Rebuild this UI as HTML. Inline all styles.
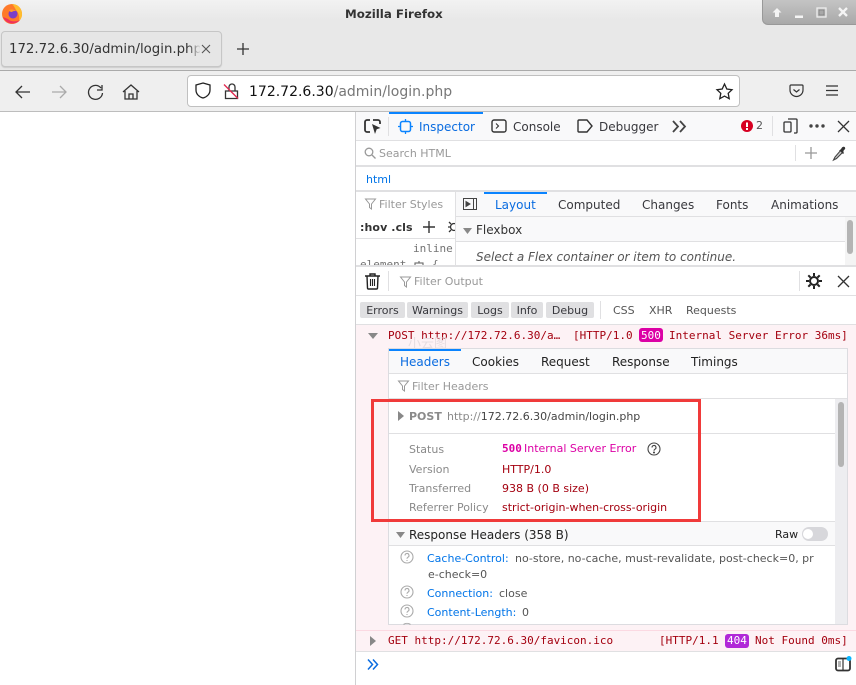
<!DOCTYPE html>
<html><head><meta charset="utf-8">
<style>
html,body{margin:0;padding:0;width:856px;height:685px;overflow:hidden;background:#fff}
body{position:relative;font-family:"DejaVu Sans","Liberation Sans",sans-serif;color:#38383d}
.t{position:absolute;white-space:nowrap;line-height:16px;font-size:12px}
.m{font-family:"DejaVu Sans Mono","Liberation Mono",monospace;font-size:11px}
.b{position:absolute}
svg{position:absolute;overflow:visible}
.btn{position:absolute;top:302px;height:16px;background:#e0e0e2;border-radius:2px;font-size:11px;line-height:18px;text-align:center;color:#38383d}
</style></head><body>
<!-- title bar -->
<div class="b" style="left:0;top:0;width:856px;height:70px;background:linear-gradient(#f2f2f2,#e8e8e8 20px,#e8e8e8)"></div>
<div class="t" style="left:345px;top:6px;font-size:11.8px;font-weight:bold;color:#333">Mozilla Firefox</div>
<svg style="left:2px;top:2px" width="21" height="22" viewBox="0 0 21 22">
<circle cx="10" cy="12" r="10" fill="#ff7a2a"/><path d="M10 2a10 10 0 0 1 10 10c0 3-1 5-3 7 1-5-1-9-3-11-1-2-2-4-4-6z" fill="#ffbd2e"/><path d="M1 15a10 10 0 0 0 17 3c-4 2-9 2-12-1z" fill="#f0325c"/><circle cx="11" cy="12" r="4.5" fill="#7a3fc8"/><path d="M7 8c2-1 5-1 7 1-2 0-3 0-4 1-1 0-2 0-3-2z" fill="#ff9a2a"/>
</svg>
<div class="b" style="left:762px;top:0;width:94px;height:25px;background:linear-gradient(#c4c4c4,#a9a9a9);border-radius:0 0 0 6px;border-left:1px solid #999;border-bottom:1px solid #999;box-sizing:border-box"></div>
<svg style="left:770px;top:6px" width="80" height="14" viewBox="0 0 80 14">
<path d="M7 2l4.500 4.500H9V11H5V6.500H2.500z" fill="#f4f4f4"/>
<rect x="25" y="9.500" width="8" height="2.500" fill="#f4f4f4"/>
<rect x="47" y="2" width="9" height="9" fill="none" stroke="#eee" stroke-width="1.300"/><rect x="49" y="4" width="5" height="5" fill="#a8a8a8" stroke="#777" stroke-width=".6"/>
<path d="M69 2l8 8M77 2l-8 8" stroke="#f4f4f4" stroke-width="2.300"/>
</svg>
<!-- tab -->
<div class="b" style="left:1px;top:31px;width:221px;height:36px;background:#e6e6e6;border:1px solid #c6c6c6;box-sizing:border-box;border-radius:4px;box-shadow:0 1px 1px #ccc"></div>
<div class="t" style="left:9px;top:42px;font-size:13.3px;color:#333;width:191px;overflow:hidden">172.72.6.30/admin/login.php</div>
<div class="b" style="left:188px;top:33px;width:13px;height:32px;background:linear-gradient(90deg,rgba(230,230,230,0),#e6e6e6)"></div>
<svg style="left:201px;top:44px" width="10" height="10"><path d="M1 1l8 8M9 1l-8 8" stroke="#555" stroke-width="1.100"/></svg>
<svg style="left:236px;top:42px" width="14" height="14"><path d="M7 1v12M1 7h12" stroke="#333" stroke-width="1.300"/></svg>
<!-- nav -->
<div class="b" style="left:0;top:70px;width:856px;height:1px;background:#aaa"></div>
<div class="b" style="left:0;top:71px;width:856px;height:40px;background:#efefef"></div>
<div class="b" style="left:0;top:111px;width:856px;height:1px;background:#bdbdbd"></div>
<svg style="left:15px;top:83px" width="130" height="18" viewBox="0 0 130 18" fill="none" stroke="#333" stroke-width="1.300">
<path d="M1 9h14M7 3L1 9l6 6"/>
<path d="M37 9h14M45 3l6 6-6 6" stroke="#aaa"/>
<path d="M86 5a7 7 0 1 0 1.500 5M87 2v5h-5"/>
<path d="M108 9l8-7 8 7M110 8v8h12V8M114 16v-5h4v5"/>
</svg>
<div class="b" style="left:187px;top:75px;width:553px;height:32px;background:#fff;border:1px solid #c0c0c0;box-sizing:border-box;border-radius:4px"></div>
<svg style="left:195px;top:82px" width="18" height="18" fill="none" stroke="#222" stroke-width="1.300"><path d="M8 1l7 2v5c0 4-3 7-7 8-4-1-7-4-7-8V3z"/></svg>
<svg style="left:224px;top:83px" width="16" height="17" fill="none"><path d="M5 8V4a3 3 0 0 1 6 0v4M1.500 8h12v7.500h-12z" stroke="#333" stroke-width="1.300"/><path d="M0 1.500l14 14" stroke="#e22850" stroke-width="1.300"/></svg>
<div class="t" style="left:249px;top:84px;font-size:14px;color:#111">172.72.6.30<span style="color:#777">/admin/login.php</span></div>
<svg style="left:716px;top:83px" width="17" height="17" fill="none" stroke="#222" stroke-width="1.300"><path d="M8.500 1l2.300 5 5.200.7-3.800 3.600 1 5.400-4.700-2.600-4.700 2.600 1-5.400L1 6.700 6.200 6z"/></svg>
<svg style="left:789px;top:84px" width="15" height="14" fill="none" stroke="#333" stroke-width="1.200"><path d="M2 1h11a1 1 0 0 1 1 1v4a6.500 6.500 0 0 1-13 0V2a1 1 0 0 1 1-1z"/><path d="M4.500 5.500L7.500 8l3-2.500"/></svg>
<svg style="left:826px;top:85px" width="12" height="11" stroke="#333" stroke-width="1.200"><path d="M0 1h12M0 5.500h12M0 10h12"/></svg>
<!-- devtools frame -->
<div class="b" style="left:355px;top:112px;width:1px;height:573px;background:#d0d0d2"></div>
<div class="b" style="left:356px;top:112px;width:500px;height:28px;background:#f9f9fa"></div>
<div class="b" style="left:389px;top:112px;width:94px;height:2px;background:#0a84ff"></div>
<div class="b" style="left:356px;top:140px;width:500px;height:1px;background:#e0e0e2"></div>
<svg style="left:364px;top:119px" width="18" height="15" fill="none"><path d="M6 1H3a2 2 0 0 0-2 2v8a2 2 0 0 0 2 2h3M9 1h5a2 2 0 0 1 2 2v2" stroke="#333" stroke-width="1.800"/><path d="M8 5l8.500 4-3.800 1.300L11 15z" fill="#333"/></svg>
<div class="b" style="left:388px;top:117px;width:1px;height:19px;background:#e0e0e2"></div>
<svg style="left:398px;top:119px" width="15" height="15" fill="none" stroke="#0a84ff"><rect x="2.500" y="2.500" width="10" height="10" rx="2" stroke-width="1.500"/><path d="M7.500 0v2M7.500 13v2M0 7.500h2M13 7.500h2" stroke-width="1.300"/></svg>
<div class="t" style="left:419px;top:119px;color:#0a6ce0">Inspector</div>
<svg style="left:491px;top:119px" width="16" height="14" fill="none" stroke="#333" stroke-width="1.400"><rect x="1" y="1" width="14" height="12" rx="2"/><path d="M5 4.500L7.500 7 5 9.500" stroke-width="1.100"/></svg>
<div class="t" style="left:513px;top:119px">Console</div>
<svg style="left:577px;top:119px" width="16" height="14" fill="none" stroke="#333" stroke-width="1.400"><path d="M2 1h8l5 6-5 6H2a1 1 0 0 1-1-1V2a1 1 0 0 1 1-1z"/></svg>
<div class="t" style="left:599px;top:119px">Debugger</div>
<svg style="left:672px;top:120px" width="15" height="13" fill="none" stroke="#444" stroke-width="1.800"><path d="M1 1l5 5.500L1 12M8 1l5 5.500L8 12"/></svg>
<svg style="left:741px;top:120px" width="12" height="12"><circle cx="6" cy="6" r="6" fill="#d70022"/><rect x="5" y="2.500" width="2" height="4.500" fill="#fff"/><rect x="5" y="8" width="2" height="2" fill="#fff"/></svg>
<div class="t" style="left:756px;top:118px;font-size:11px;color:#555">2</div>
<div class="b" style="left:772px;top:116px;width:1px;height:20px;background:#e0e0e2"></div>
<svg style="left:783px;top:118px" width="15" height="16" fill="none" stroke="#333" stroke-width="1.300"><rect x="1" y="4" width="7" height="10" rx="1"/><path d="M5 1h8a1 1 0 0 1 1 1v12a1 1 0 0 1-1 1h-2"/></svg>
<svg style="left:809px;top:124px" width="16" height="4" fill="#444"><circle cx="2" cy="2" r="1.700"/><circle cx="8" cy="2" r="1.700"/><circle cx="14" cy="2" r="1.700"/></svg>
<svg style="left:838px;top:121px" width="11" height="11" stroke="#333" stroke-width="1.300"><path d="M0 0l11 11M11 0L0 11"/></svg>
<!-- search html -->
<svg style="left:364px;top:147px" width="12" height="12" fill="none" stroke="#999" stroke-width="1.300"><circle cx="5" cy="5" r="3.800"/><path d="M8 8l3.500 3.500"/></svg>
<div class="t" style="left:379px;top:146px;font-size:11px;color:#999">Search HTML</div>
<div class="b" style="left:795px;top:145px;width:1px;height:16px;background:#e0e0e2"></div>
<svg style="left:805px;top:147px" width="12" height="12" stroke="#999" stroke-width="1.300"><path d="M6 0v12M0 6h12"/></svg>
<svg style="left:832px;top:146px" width="14" height="15" fill="none"><path d="M9 4l2 2-6.500 6.500-3 1.500 1.500-3z" stroke="#444" stroke-width="1.100" fill="#ccc"/><path d="M8 4l1-1 1-1.500c1-1 2.500-1 3 0s0 2-1 2.500L11 6l1 1-1 1-4-4 1 0z" fill="#333"/></svg>
<div class="b" style="left:356px;top:165px;width:500px;height:2px;background:#e0e0e2"></div>
<div class="t" style="left:366px;top:172px;font-size:11px;color:#0074e8">html</div>
<div class="b" style="left:356px;top:190px;width:500px;height:2px;background:#e0e0e2"></div>
<!-- left rules pane -->
<svg style="left:365px;top:198px" width="11" height="12" fill="none" stroke="#999"><path d="M.5 1h10L6.500 6v5l-2-1.500V6z"/></svg>
<div class="t" style="left:379px;top:197px;font-size:11px;color:#999">Filter Styles</div>
<div class="t" style="left:360px;top:220px;font-size:11px;font-weight:bold;color:#333;letter-spacing:.1px">:hov .cls</div>
<svg style="left:423px;top:221px" width="12" height="12" stroke="#333" stroke-width="1.400"><path d="M6 0v12M0 6h12"/></svg>
<svg style="left:448px;top:221px" width="7" height="12" fill="none" stroke="#333" stroke-width="1.300"><circle cx="6" cy="6" r="3.500"/><path d="M1 1l2 2M1 11l2-2M0 6h2"/></svg>
<div class="b" style="left:356px;top:238px;width:99px;height:1px;background:#e0e0e2"></div>
<div class="t m" style="left:413px;top:241px;color:#737373;letter-spacing:0">inline</div>
<div class="b" style="left:356px;top:256px;width:99px;height:9px;overflow:hidden"><div class="t m" style="left:4px;top:1px;color:#737373">element</div>
<svg style="left:57px;top:5px" width="12" height="12" fill="none" stroke="#666" stroke-width="1.100"><rect x="2" y="2" width="8" height="8"/><path d="M6 0v2M0 6h2M10 6h2"/></svg>
<div class="t m" style="left:76px;top:1px;color:#737373">{</div></div>
<div class="b" style="left:455px;top:192px;width:1px;height:73px;background:#e0e0e2"></div>
<!-- right side tabs -->
<div class="b" style="left:456px;top:192px;width:400px;height:24px;background:#f9f9fa"></div>
<div class="b" style="left:484px;top:192px;width:63px;height:2px;background:#0a84ff"></div>
<div class="b" style="left:456px;top:216px;width:400px;height:1px;background:#e0e0e2"></div>
<svg style="left:463px;top:198px" width="14" height="12" fill="none" stroke="#444"><rect x=".5" y=".5" width="13" height="11"/><path d="M10.500 0v12"/><path d="M3 3.500L7 6 3 8.500z" fill="#444"/></svg>
<div class="t" style="left:495px;top:197px;color:#0a6ce0">Layout</div>
<div class="t" style="left:558px;top:197px">Computed</div>
<div class="t" style="left:642px;top:197px">Changes</div>
<div class="t" style="left:716px;top:197px">Fonts</div>
<div class="t" style="left:771px;top:197px">Animations</div>
<div class="b" style="left:456px;top:217px;width:389px;height:24px;background:#f9f9fa"></div>
<div class="b" style="left:456px;top:241px;width:389px;height:1px;background:#e0e0e2"></div>
<svg style="left:463px;top:228px" width="9" height="6"><path d="M0 0h9L4.500 6z" fill="#888"/></svg>
<div class="t" style="left:476px;top:222px;color:#333">Flexbox</div>
<div class="t" style="left:476px;top:249px;color:#555;font-style:italic">Select a Flex container or item to continue.</div>
<div class="b" style="left:845px;top:217px;width:11px;height:48px;background:#f4f4f4"></div>
<div class="b" style="left:847px;top:220px;width:6px;height:34px;background:#b4b4b4;border-radius:3px"></div>
<div class="b" style="left:356px;top:265px;width:500px;height:2px;background:#e0e0e2"></div>
<!-- console toolbar -->
<svg style="left:365px;top:273px" width="15" height="17" fill="none" stroke="#222" stroke-width="1.400"><path d="M0 3h15M5 3V1h5v2M2 3l.5 12a1 1 0 0 0 1 1h8a1 1 0 0 0 1-1L13 3"/><path d="M5.500 6v7M7.500 6v7M9.500 6v7" stroke-width="1.100"/></svg>
<div class="b" style="left:388px;top:271px;width:1px;height:20px;background:#e0e0e2"></div>
<svg style="left:400px;top:276px" width="11" height="12" fill="none" stroke="#999"><path d="M.5 1h10L6.500 6v5l-2-1.500V6z"/></svg>
<div class="t" style="left:414px;top:274px;font-size:11px;color:#999">Filter Output</div>
<div class="b" style="left:799px;top:271px;width:1px;height:20px;background:#e0e0e2"></div>
<svg style="left:806px;top:273px" width="16" height="16" fill="none" stroke="#222"><circle cx="8" cy="8" r="4" stroke-width="2"/><path d="M8 0v3M8 13v3M0 8h3M13 8h3M2.300 2.300l2.200 2.200M11.500 11.500l2.200 2.200M13.700 2.300l-2.200 2.200M4.500 11.500l-2.200 2.200" stroke-width="2"/></svg>
<svg style="left:838px;top:276px" width="11" height="11" stroke="#333" stroke-width="1.300"><path d="M0 0l11 11M11 0L0 11"/></svg>
<div class="b" style="left:356px;top:295px;width:500px;height:1px;background:#e0e0e2"></div>
<div class="btn" style="left:360px;width:45px">Errors</div>
<div class="btn" style="left:407px;width:61px">Warnings</div>
<div class="btn" style="left:471px;width:38px">Logs</div>
<div class="btn" style="left:511px;width:32px">Info</div>
<div class="btn" style="left:546px;width:48px">Debug</div>
<div class="b" style="left:600px;top:301px;width:1px;height:18px;background:#e0e0e2"></div>
<div class="t" style="left:613px;top:303px;font-size:11px;color:#555">CSS</div>
<div class="t" style="left:649px;top:303px;font-size:11px;color:#555">XHR</div>
<div class="t" style="left:686px;top:303px;font-size:11px;color:#555">Requests</div>
<!-- error area -->
<div class="b" style="left:356px;top:324px;width:500px;height:328px;background:#fdf2f5"></div>
<div class="b" style="left:356px;top:324px;width:500px;height:1px;background:#e0e0e2"></div>
<svg style="left:368px;top:333px" width="10" height="6"><path d="M0 0h10L5 6z" fill="#888"/></svg>
<div class="t m" style="left:388px;top:328px;color:#a4000f;font-size:11px">POST http://172.72.6.30/a…</div>
<div class="t m" style="left:573px;top:328px;color:#a4000f;font-size:11px">[HTTP/1.0</div>
<div class="b" style="left:639px;top:328px;width:24px;height:14px;background:#dc00a5;border-radius:3px"></div>
<div class="t m" style="left:641px;top:328px;color:#fff;font-size:11px">500</div>
<div class="t m" style="left:669px;top:328px;color:#a4000f;font-size:11px">Internal Server Error 36ms]</div>
<div class="t" style="left:408px;top:335px;font-size:13px;color:#e6dde1;font-family:'Noto Sans CJK SC',sans-serif">小云图</div>
<!-- panel -->
<div class="b" style="left:388px;top:348px;width:460px;height:277px;background:#fff;border:1px solid #dcdce0;box-sizing:border-box"></div>
<div class="b" style="left:389px;top:349px;width:458px;height:24px;background:#f9f9fa"></div>
<div class="b" style="left:389px;top:349px;width:72px;height:2px;background:#0a84ff"></div>
<div class="b" style="left:389px;top:373px;width:458px;height:1px;background:#e0e0e2"></div>
<div class="t" style="left:400px;top:354px;color:#0a6ce0">Headers</div>
<div class="t" style="left:472px;top:354px;color:#222">Cookies</div>
<div class="t" style="left:541px;top:354px;color:#222">Request</div>
<div class="t" style="left:612px;top:354px;color:#222">Response</div>
<div class="t" style="left:691px;top:354px;color:#222">Timings</div>
<svg style="left:398px;top:380px" width="11" height="12" fill="none" stroke="#999"><path d="M.5 1h10L6.500 6v5l-2-1.500V6z"/></svg>
<div class="t" style="left:412px;top:379px;font-size:11px;color:#999">Filter Headers</div>
<div class="b" style="left:389px;top:398px;width:458px;height:1px;background:#e0e0e2"></div>
<svg style="left:398px;top:411px" width="6" height="10"><path d="M0 0l6 5-6 5z" fill="#888"/></svg>
<div class="t" style="left:409px;top:409px;font-size:11px;font-weight:bold;color:#8a8a8a">POST</div>
<div class="t" style="left:447px;top:409px;font-size:11px;color:#444"><span style="color:#8a8a8a">http://</span>172.72.6.30/admin/login.php</div>
<div class="b" style="left:389px;top:433px;width:446px;height:1px;background:#e0e0e2"></div>
<div class="t" style="left:409px;top:442px;font-size:11px;color:#8a8a8a">Status</div>
<div class="t m" style="left:502px;top:441px;font-size:11px;font-weight:bold;color:#dc00a5">500</div>
<div class="t" style="left:524px;top:441px;font-size:11px;color:#dc00a5">Internal Server Error</div>
<svg style="left:647px;top:442px" width="14" height="14" fill="none" stroke="#444" stroke-width="1.100"><circle cx="7" cy="7" r="6"/><path d="M5 5.500a2 2 0 1 1 3 1.700c-.7.4-1 .8-1 1.500"/><circle cx="7" cy="10.500" r=".5"/></svg>
<div class="t" style="left:409px;top:462px;font-size:11px;color:#8a8a8a">Version</div>
<div class="t" style="left:502px;top:462px;font-size:11px;color:#a4000f">HTTP/1.0</div>
<div class="t" style="left:409px;top:481px;font-size:11px;color:#8a8a8a">Transferred</div>
<div class="t" style="left:502px;top:481px;font-size:11px;color:#a4000f">938 B (0 B size)</div>
<div class="t" style="left:409px;top:500px;font-size:11px;color:#8a8a8a">Referrer Policy</div>
<div class="t" style="left:502px;top:500px;font-size:11px;color:#a4000f">strict-origin-when-cross-origin</div>
<!-- response headers -->
<div class="b" style="left:389px;top:521px;width:446px;height:25px;background:#f9f9fa;border-top:1px solid #e0e0e2;border-bottom:1px solid #e0e0e2;box-sizing:border-box"></div>
<svg style="left:396px;top:532px" width="9" height="6"><path d="M0 0h9L4.500 6z" fill="#888"/></svg>
<div class="t" style="left:409px;top:527px;color:#222">Response Headers (358 B)</div>
<div class="t" style="left:775px;top:527px;font-size:11px;color:#222">Raw</div>
<div class="b" style="left:802px;top:527px;width:26px;height:14px;background:#d7d7db;border-radius:7px"></div>
<div class="b" style="left:803px;top:529px;width:10px;height:10px;background:#fff;border-radius:5px"></div>
<svg style="left:400px;top:550px" width="14" height="70" fill="none" stroke="#aaa" stroke-width="1.100"><g><circle cx="7" cy="7" r="6"/><path d="M5 5.500a2 2 0 1 1 3 1.700c-.7.4-1 .8-1 1.500M7 10v1"/></g><g transform="translate(0,35)"><circle cx="7" cy="7" r="6"/><path d="M5 5.500a2 2 0 1 1 3 1.700c-.7.4-1 .8-1 1.500M7 10v1"/></g><g transform="translate(0,54)"><circle cx="7" cy="7" r="6"/><path d="M5 5.500a2 2 0 1 1 3 1.700c-.7.4-1 .8-1 1.500M7 10v1"/></g><path d="M3.500 74.500a6 6 0 0 1 7 0"/></svg>
<div class="t" style="left:427px;top:551px;font-size:11px;color:#0074e8">Cache-Control:</div>
<div class="t" style="left:515px;top:551px;font-size:11px;color:#555">no-store, no-cache, must-revalidate, post-check=0, pr</div>
<div class="t" style="left:428px;top:567px;font-size:11px;color:#555">e-check=0</div>
<div class="t" style="left:427px;top:586px;font-size:11px;color:#0074e8">Connection:</div>
<div class="t" style="left:499px;top:586px;font-size:11px;color:#555">close</div>
<div class="t" style="left:427px;top:605px;font-size:11px;color:#0074e8">Content-Length:</div>
<div class="t" style="left:522px;top:605px;font-size:11px;color:#555">0</div>
<div class="b" style="left:835px;top:399px;width:12px;height:225px;background:#ededf0"></div>
<div class="b" style="left:838px;top:402px;width:6px;height:65px;background:#b4b4b4;border-radius:3px"></div>
<!-- red rectangle -->
<div class="b" style="left:371px;top:399px;width:330px;height:123px;border:3px solid #f03a3a;box-sizing:border-box"></div>
<!-- GET row -->
<div class="b" style="left:356px;top:630px;width:500px;height:1px;background:#fbd9e2"></div>
<div class="b" style="left:356px;top:651px;width:500px;height:1px;background:#e0e0e2"></div>
<svg style="left:370px;top:636px" width="6" height="10"><path d="M0 0l6 5-6 5z" fill="#888"/></svg>
<div class="t m" style="left:388px;top:633px;color:#a4000f">GET http://172.72.6.30/favicon.ico</div>
<div class="t m" style="left:659px;top:633px;color:#a4000f">[HTTP/1.1</div>
<div class="b" style="left:725px;top:634px;width:24px;height:14px;background:#b128d8;border-radius:3px"></div>
<div class="t m" style="left:727px;top:633px;color:#fff">404</div>
<div class="t m" style="left:755px;top:633px;color:#a4000f">Not Found 0ms]</div>
<!-- input row -->
<svg style="left:367px;top:659px" width="12" height="11" fill="none" stroke="#0a6ce0" stroke-width="1.500"><path d="M1 .5l4.500 5L1 10.500M6 .5l4.500 5-4.500 5"/></svg>
<svg style="left:835px;top:656px" width="17" height="16" fill="none"><rect x="1" y="2.500" width="14" height="12" rx="2" stroke="#333" stroke-width="1.800"/><path d="M8 2.500v12" stroke="#333" stroke-width="1.200"/><path d="M3 6h3M3 8h3M3 10h3" stroke="#333" stroke-width=".8"/><circle cx="14" cy="2.500" r="2.500" fill="#0ab5ff"/></svg>
</body></html>
